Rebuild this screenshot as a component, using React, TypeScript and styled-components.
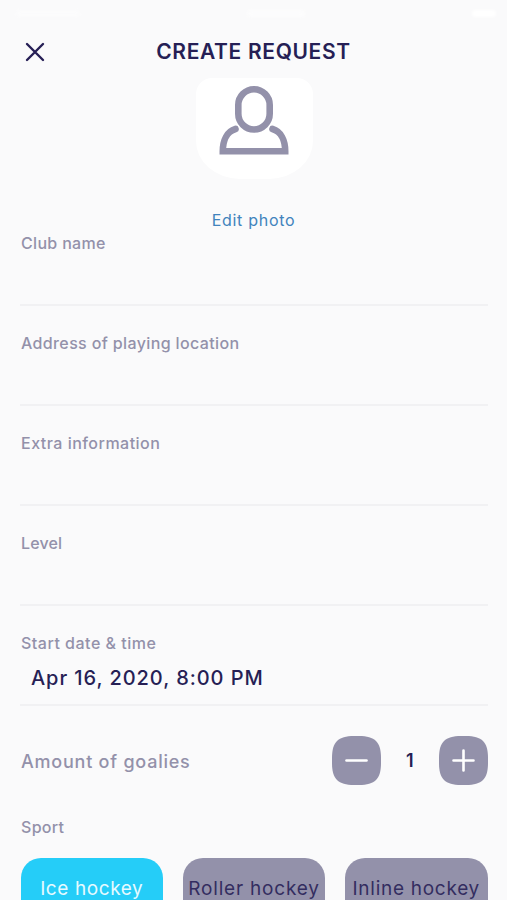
import React from 'react';
import styled, { createGlobalStyle } from 'styled-components';

const navy = '#261f55';
const muted = '#9391aa';

const GlobalStyle = createGlobalStyle`
  * { box-sizing: border-box; }
  html, body { margin: 0; background: #fafafb; }
  body { overflow: hidden; font-family: Inter, "Open Sans", sans-serif; }
  button { font: inherit; border: 0; padding: 0; background: none; }
`;

const Screen = styled.main`
  width: 507px;
  height: 900px;
  overflow: hidden;
  display: flex;
  flex-direction: column;
  background: #fafafb;
`;

const StatusBar = styled.div`
  height: 26px;
  flex: none;
  display: flex;
  justify-content: space-between;
  align-items: center;
  padding: 0 11px 0 16px;
`;

const StatusMark = styled.span<{ $width: number; $opacity: number }>`
  width: ${(p) => p.$width}px;
  height: 7px;
  border-radius: 4px;
  background: #fff;
  filter: blur(1.5px);
  opacity: ${(p) => p.$opacity};
`;

const Header = styled.header`
  height: 52px;
  flex: none;
  display: grid;
  grid-template-columns: 70px 1fr 70px;
  align-items: center;
`;

const CloseButton = styled.button`
  display: flex;
  width: 20px;
  height: 20px;
  margin-left: 25px;
`;

const Text = styled.span<{ $size: number; $spacing: number; $weight?: number; $color?: string }>`
  font-size: ${(p) => p.$size}px;
  font-weight: ${(p) => p.$weight ?? 500};
  letter-spacing: ${(p) => p.$spacing}px;
  color: ${(p) => p.$color ?? muted};
  line-height: 24px;
  white-space: nowrap;
`;

const Title = styled.h1`
  margin: 0;
  text-align: center;
  font-size: 21px;
  line-height: 26px;
  font-weight: 600;
  letter-spacing: 0.65px;
  color: ${navy};
  white-space: nowrap;
`;

const Photo = styled.section`
  height: 154px;
  flex: none;
  display: flex;
  flex-direction: column;
  align-items: center;
  gap: 29px;
`;

const Avatar = styled.div`
  width: 117px;
  height: 101px;
  flex: none;
  display: flex;
  justify-content: center;
  margin-left: 2px;
  padding: 7px 2px 0 0;
  background: #fff;
  border-radius: 16px 16px 44px 44px / 16px 16px 38px 38px;
`;

const Fields = styled.div`
  margin-top: -26px;
  display: flex;
  flex-direction: column;
  flex: none;
`;

const Field = styled.section`
  height: 100px;
  flex: none;
  margin: 0 19px 0 20px;
  padding: 25px 0 0 1px;
  display: flex;
  flex-direction: column;
  gap: 11px;
  border-bottom: 2px solid #f1f1f3;
`;

const DateValue = styled.div`
  padding-left: 10px;
`;

const Goalies = styled.section`
  height: 109px;
  flex: none;
  display: flex;
  align-items: center;
  justify-content: space-between;
  padding: 0 19.5px 0 21px;
`;

const GoaliesLabel = styled.div`
  display: flex;
  padding-top: 2px;
`;

const Stepper = styled.div`
  display: grid;
  grid-template-columns: 49px 57.5px 49px;
  align-items: center;
  justify-items: center;
`;

const StepButton = styled.button`
  width: 49px;
  height: 49px;
  display: flex;
`;

const Sport = styled.section`
  flex: none;
  padding: 0 19.5px 0 20.5px;
`;

const SportLabel = styled.div`
  height: 43px;
  padding-left: 0.5px;
  display: flex;
`;

const Options = styled.div`
  display: grid;
  grid-template-columns: repeat(3, 142.5px);
  justify-content: space-between;
`;

const Option = styled.button<{ $active?: boolean }>`
  height: 61px;
  display: flex;
  justify-content: center;
  align-items: center;
  border-radius: 20px;
  background: ${(p) => (p.$active ? '#25cdf8' : muted)};
`;

const fields = [
  { label: 'Club name', spacing: 0.32 },
  { label: 'Address of playing location', spacing: 0.37 },
  { label: 'Extra information', spacing: 0.48 },
  { label: 'Level', spacing: 0.15 },
  { label: 'Start date & time', spacing: 0.5, value: 'Apr 16, 2020, 8:00 PM' },
];

const sports = [
  { label: 'Ice hockey', spacing: 0.6, active: true },
  { label: 'Roller hockey', spacing: 0.8 },
  { label: 'Inline hockey', spacing: 0.72 },
];

function StepIcon({ plus }: { plus?: boolean }) {
  return (
    <svg width="49" height="49" viewBox="0 0 49 49">
      <path
        d="M22 0H27C43 0 49 6 49 22V27C49 43 43 49 27 49H22C6 49 0 43 0 27V22C0 6 6 0 22 0Z"
        fill={muted}
      />
      <path
        d={plus ? 'M14.5 24.5H34.5M24.5 14.5V34.5' : 'M14.5 24.5H34.5'}
        stroke="#fff"
        strokeWidth="2.6"
        strokeLinecap="round"
      />
    </svg>
  );
}

export default function App() {
  return (
    <>
      <GlobalStyle />
      <Screen>
        <StatusBar>
          <StatusMark $width={64} $opacity={0.35} />
          <StatusMark $width={58} $opacity={0.5} />
          <StatusMark $width={24} $opacity={1} />
        </StatusBar>
        <Header>
          <CloseButton aria-label="Close">
            <svg width="20" height="20" viewBox="0 0 20 20">
              <path d="M2 2L18 18M18 2L2 18" stroke={navy} strokeWidth="2.4" strokeLinecap="round" />
            </svg>
          </CloseButton>
          <Title>CREATE REQUEST</Title>
        </Header>
        <Photo>
          <Avatar>
            <svg width="70" height="70" viewBox="0 0 70 70" fill="none" stroke={muted} strokeWidth="6.6">
              <rect x="19.3" y="4.3" width="31.4" height="40.2" rx="15.7" />
              <path d="M16.5 44C8 46.5 3.8 55.5 3.8 66.3H66.2C66.2 55.5 62 46.5 53.5 44" strokeLinecap="round" />
            </svg>
          </Avatar>
          <Text $size={16} $spacing={0.7} $weight={400} $color="#4183bd">Edit photo</Text>
        </Photo>
        <Fields>
          {fields.map((f) => (
            <Field key={f.label}>
              <Text $size={16} $spacing={f.spacing}>{f.label}</Text>
              {f.value && (
                <DateValue>
                  <Text $size={20} $spacing={0.93} $color={navy}>{f.value}</Text>
                </DateValue>
              )}
            </Field>
          ))}
        </Fields>
        <Goalies>
          <GoaliesLabel>
            <Text $size={18} $spacing={0.77}>Amount of goalies</Text>
          </GoaliesLabel>
          <Stepper>
            <StepButton aria-label="Decrease"><StepIcon /></StepButton>
            <Text $size={18} $spacing={0} $weight={600} $color={navy}>1</Text>
            <StepButton aria-label="Increase"><StepIcon plus /></StepButton>
          </Stepper>
        </Goalies>
        <Sport>
          <SportLabel><Text $size={16} $spacing={0.3}>Sport</Text></SportLabel>
          <Options>
            {sports.map((s) => (
              <Option key={s.label} $active={s.active}>
                <Text $size={19} $spacing={s.spacing} $weight={400} $color={s.active ? '#e6faff' : '#332d60'}>
                  {s.label}
                </Text>
              </Option>
            ))}
          </Options>
        </Sport>
      </Screen>
    </>
  );
}
